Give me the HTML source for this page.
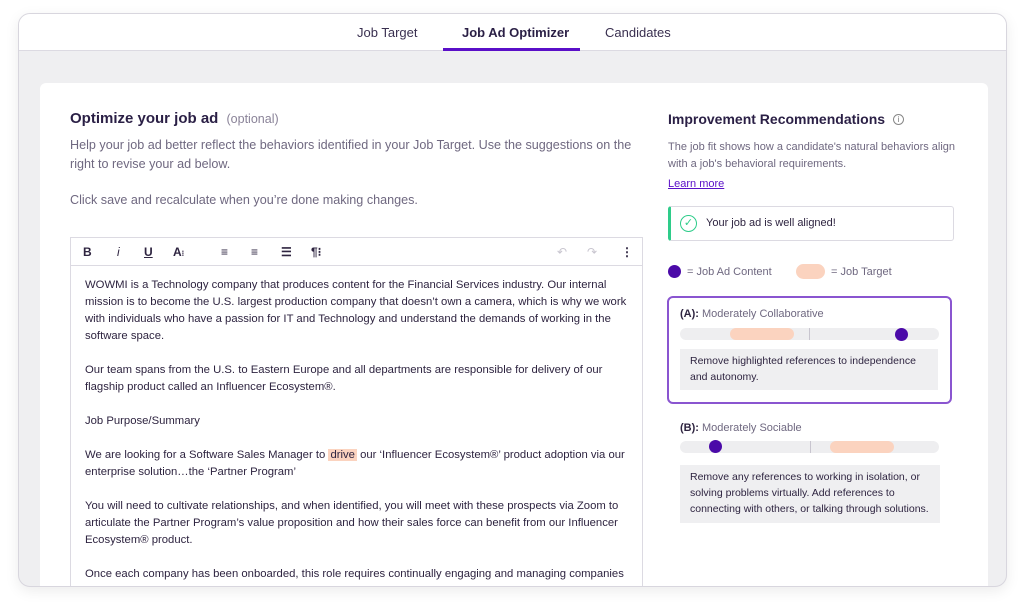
<!DOCTYPE html>
<html><head><meta charset="utf-8"><style>
*{margin:0;padding:0;box-sizing:border-box}
body{width:1024px;height:608px;background:#fff;font-family:"Liberation Sans",sans-serif;position:relative;overflow:hidden;color:#2e2440}
.frame{position:absolute;left:18px;top:13px;width:989px;height:574px;border:1px solid #d8d6de;border-radius:12px;overflow:hidden;background:#efeff1;box-shadow:0 4px 14px rgba(0,0,0,.08)}
.tabs{position:absolute;left:0;top:0;width:100%;height:37px;background:#fff;border-bottom:1px solid #dcdae2}
.tab{position:absolute;top:11px;font-size:13px;color:#3a3050}
.abs{position:absolute}
.card{position:absolute;left:21px;top:69px;width:948px;height:520px;background:#fff;border-radius:6px}
.ed{position:absolute;left:30px;top:154px;width:573px;height:400px;border:1px solid #dcdae2}
.tb{height:28px;border-bottom:1px solid #dcdae2;position:relative;font-size:12px;color:#2e2440}
.tb span{position:absolute;top:7px;font-weight:bold}
.txt{position:absolute;left:14px;top:39px;font-size:11.3px;line-height:17px;color:#2e2440;width:550px}
.gray{color:#6f6880}
</style></head><body>
<div class="frame">
 <div class="tabs">
  <div class="tab" style="left:338px">Job Target</div>
  <div class="tab" style="left:443px;font-weight:bold;color:#2a1f45">Job Ad Optimizer</div>
  <div class="tab" style="left:586px">Candidates</div>
  <div class="abs" style="left:424px;top:34px;width:137px;height:3px;background:#5a0fc8"></div>
 </div>
 <div class="card">
  <div class="abs" style="left:30px;top:27px;font-size:15px;font-weight:bold;color:#2a1f45">Optimize your job ad <span style="font-weight:normal;font-size:12.5px;color:#8a8398;margin-left:4px">(optional)</span></div>
  <div class="abs gray" style="left:30px;top:53px;font-size:12.6px;line-height:19px;width:575px">Help your job ad better reflect the behaviors identified in your Job Target. Use the suggestions on the right to revise your ad below.</div>
  <div class="abs gray" style="left:30px;top:110px;font-size:12.6px">Click save and recalculate when you’re done making changes.</div>
  <div class="ed">
   <div class="tb">
    <span style="left:12px">B</span><span style="left:46px;font-style:italic;font-weight:normal">i</span><span style="left:73px;text-decoration:underline">U</span><span style="left:102px">A<small style="font-size:8px">⁝</small></span>
    <span style="left:150px">≡</span><span style="left:180px">≡</span><span style="left:210px">☰</span><span style="left:240px">¶⁝</span>
    <span style="left:486px;color:#c8c5cf;font-weight:normal">↶</span><span style="left:516px;color:#c8c5cf;font-weight:normal">↷</span><span style="left:550px">⋮</span>
   </div>
   <div class="txt">WOWMI is a Technology company that produces content for the Financial Services industry. Our internal mission is to become the U.S. largest production company that doesn’t own a camera, which is why we work with individuals who have a passion for IT and Technology and understand the demands of working in the software space.<br><br>Our team spans from the U.S. to Eastern Europe and all departments are responsible for delivery of our flagship product called an Influencer Ecosystem®.<br><br>Job Purpose/Summary<br><br>We are looking for a Software Sales Manager to <span style="background:#fbd3bf;padding:0 2px">drive</span> our ‘Influencer Ecosystem®’ product adoption via our enterprise solution…the ‘Partner Program’<br><br>You will need to cultivate relationships, and when identified, you will meet with these prospects via Zoom to articulate the Partner Program’s value proposition and how their sales force can benefit from our Influencer Ecosystem® product.<br><br>Once each company has been onboarded, this role requires continually engaging and managing companies throughout their lifecycle with the Partner Program, as the program’s contract length will be based on yearly</div>
  </div>
  <!-- right -->
  <div class="abs" style="left:628px;top:28px;font-size:14px;font-weight:bold;color:#2a1f45">Improvement Recommendations <span style="font-weight:normal;font-size:11px;color:#777;border:1px solid #888;border-radius:50%;display:inline-block;width:11px;height:11px;line-height:9px;text-align:center;font-size:8px;margin-left:4px;vertical-align:2px">i</span></div>
  <div class="abs gray" style="left:628px;top:56px;font-size:11px;line-height:17px;width:300px">The job fit shows how a candidate's natural behaviors align with a job's behavioral requirements.</div>
  <div class="abs" style="left:628px;top:95px;font-size:11px;color:#5a0fc8;text-decoration:underline">Learn more</div>
  <div class="abs" style="left:628px;top:123px;width:286px;height:35px;border:1px solid #dcdae2;border-left:3px solid #2ecc8a;border-radius:3px">
   <div class="abs" style="left:9px;top:8px;width:17px;height:17px;border:1.5px solid #2ecc8a;border-radius:50%;color:#2ecc8a;font-size:11px;text-align:center;line-height:15px">✓</div>
   <div class="abs" style="left:35px;top:10px;font-size:11px">Your job ad is well aligned!</div>
  </div>
  <div class="abs" style="left:628px;top:182px;width:13px;height:13px;border-radius:50%;background:#4b0aa8"></div>
  <div class="abs gray" style="left:647px;top:183px;font-size:11px">= Job Ad Content</div>
  <div class="abs" style="left:756px;top:181px;width:29px;height:15px;border-radius:8px;background:#fbd3bf"></div>
  <div class="abs gray" style="left:791px;top:183px;font-size:11px">= Job Target</div>
  <div class="abs" style="left:627px;top:213px;width:285px;height:108px;border:2px solid #8a55d0;border-radius:6px">
   <div class="abs" style="left:11px;top:10px;font-size:11px" ><b>(A):</b> <span class="gray">Moderately Collaborative</span></div>
   <div class="abs" style="left:11px;top:30px;width:259px;height:12px;border-radius:6px;background:#eeeef0"></div>
   <div class="abs" style="left:140px;top:30px;width:1px;height:12px;background:#c8c5cf"></div>
   <div class="abs" style="left:61px;top:30px;width:64px;height:12px;border-radius:6px;background:#fbd3bf"></div>
   <div class="abs" style="left:226px;top:30px;width:13px;height:13px;border-radius:50%;background:#4b0aa8"></div>
   <div class="abs" style="left:11px;top:51px;width:258px;height:41px;background:#efeff1;font-size:10.5px;line-height:16px;padding:4px 10px">Remove highlighted references to independence and autonomy.</div>
  </div>
  <div class="abs" style="left:640px;top:339px;font-size:11px"><b>(B):</b> <span class="gray">Moderately Sociable</span></div>
  <div class="abs" style="left:640px;top:358px;width:259px;height:12px;border-radius:6px;background:#eeeef0"></div>
  <div class="abs" style="left:770px;top:358px;width:1px;height:12px;background:#c8c5cf"></div>
  <div class="abs" style="left:790px;top:358px;width:64px;height:12px;border-radius:6px;background:#fbd3bf"></div>
  <div class="abs" style="left:669px;top:357px;width:13px;height:13px;border-radius:50%;background:#4b0aa8"></div>
  <div class="abs" style="left:640px;top:382px;width:260px;height:58px;background:#efeff1;font-size:10.5px;line-height:16px;padding:4px 10px">Remove any references to working in isolation, or solving problems virtually. Add references to connecting with others, or talking through solutions.</div>
 </div>
</div>
</body></html>
